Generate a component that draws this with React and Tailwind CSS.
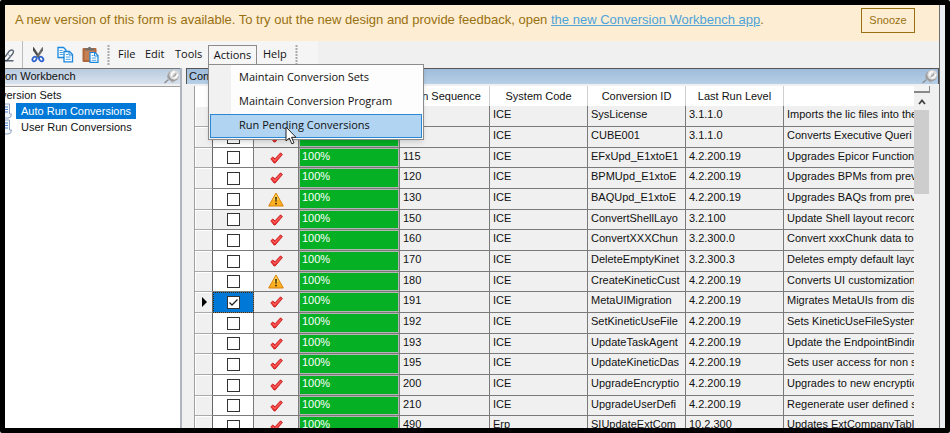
import React from "react";

const rows = [
  { seq: "", sys: "ICE", id: "SysLicense", level: "3.1.1.0", desc: "Imports the lic files into the" },
  { seq: "", sys: "ICE", id: "CUBE001", level: "3.1.1.0", desc: "Converts Executive Queri" },
  { seq: "115", sys: "ICE", id: "EFxUpd_E1xtoE1", level: "4.2.200.19", desc: "Upgrades Epicor Function" },
  { seq: "120", sys: "ICE", id: "BPMUpd_E1xtoE", level: "4.2.200.19", desc: "Upgrades BPMs from prev" },
  { seq: "130", sys: "ICE", id: "BAQUpd_E1xtoE", level: "4.2.200.19", desc: "Upgrades BAQs from prev", warn: true },
  { seq: "150", sys: "ICE", id: "ConvertShellLayo", level: "3.2.100", desc: "Update Shell layout record", dim: true },
  { seq: "160", sys: "ICE", id: "ConvertXXXChun", level: "3.2.300.0", desc: "Convert xxxChunk data to" },
  { seq: "170", sys: "ICE", id: "DeleteEmptyKinet", level: "3.2.300.3", desc: "Deletes empty default layo" },
  { seq: "180", sys: "ICE", id: "CreateKineticCust", level: "4.2.200.19", desc: "Converts UI customization", warn: true },
  { seq: "191", sys: "ICE", id: "MetaUIMigration", level: "4.2.200.19", desc: "Migrates MetaUIs from dis", current: true },
  { seq: "192", sys: "ICE", id: "SetKineticUseFile", level: "4.2.200.19", desc: "Sets KineticUseFileSystem" },
  { seq: "193", sys: "ICE", id: "UpdateTaskAgent", level: "4.2.200.19", desc: "Update the EndpointBindin" },
  { seq: "195", sys: "ICE", id: "UpdateKineticDas", level: "4.2.200.19", desc: "Sets user access for non s" },
  { seq: "200", sys: "ICE", id: "UpgradeEncryptio", level: "4.2.200.19", desc: "Upgrades to new encryptic" },
  { seq: "210", sys: "ICE", id: "UpgradeUserDefi", level: "4.2.200.19", desc: "Regenerate user defined s" },
  { seq: "490", sys: "Erp", id: "SIUpdateExtCom", level: "10.2.300", desc: "Updates ExtCompanyTabl" },
];

function Pin() {
  return (
    <svg width="16" height="15" viewBox="0 0 16 15" className="shrink-0">
      <path d="M0.500 14 L4.500 10.500" stroke="#909090" strokeWidth="1.500" />
      <path d="M3.500 5 L11 13 L8 13.500 L3 8.500 Z" fill="#a8a8a8" />
      <path d="M4 6 L10 12.500" stroke="#ececec" strokeWidth="1" />
      <ellipse cx="9.500" cy="6.500" rx="5.500" ry="5.500" fill="#999" />
      <circle cx="10.200" cy="5.800" r="4.900" fill="#dadada" />
      <path d="M7.500 7 Q7.500 2.800 11 2.800 M13.500 5 Q13 9 9.500 9" fill="none" stroke="#fff" strokeWidth="1.500" />
      <path d="M9 7 Q11 7.500 12 4.500" fill="none" stroke="#a5a5a5" strokeWidth="1.300" />
    </svg>
  );
}

function Tick() {
  return (
    <svg width="13" height="12" viewBox="0 0 13 12">
      <path d="M0.800 6.800 L2.800 5 L5 6.800 L10.600 0.800 L12.400 2.600 L5.200 11 L4 11 Z" fill="#ee3434" stroke="#c41616" strokeWidth="0.800" strokeLinejoin="round" />
      <path d="M2.500 6.600 L4.900 8.800 L11 2.300" fill="none" stroke="#ff7070" strokeWidth="1" />
    </svg>
  );
}

function Warning() {
  return (
    <svg width="16" height="15" viewBox="0 0 16 15">
      <path d="M8 1 L15.300 14 H0.700 Z" fill="#fdb022" stroke="#d98208" strokeWidth="1" strokeLinejoin="round" />
      <path d="M8 2 L11 8 H5 Z" fill="#ffd257" />
      <path d="M7.200 5 H8.800 L8.500 9.800 H7.500 Z" fill="#2c2200" />
      <rect x="7.200" y="10.800" width="1.600" height="1.600" fill="#2c2200" />
    </svg>
  );
}

function Eraser() {
  return (
    <svg width="10" height="16" viewBox="0 0 10 16" className="shrink-0">
      <path d="M0 10 L4.500 3.800 Q7.500 2 8.300 4 Q8.800 5.500 7.500 7 L2 13.500 H0" fill="#fafcff" stroke="#5b6573" strokeWidth="1.400" />
      <path d="M0 13.800 H8.500" stroke="#3d4a5c" strokeWidth="1.300" />
      <path d="M2.500 7 L5.500 9.200" stroke="#8c99ac" strokeWidth="1" />
    </svg>
  );
}

function Scissors() {
  return (
    <svg width="14" height="17" viewBox="0 0 14 17">
      <path d="M2 1 L3 1.500 L8.800 10.500 L7.200 12 L2 4.500 Z" fill="#4b4b4b" />
      <path d="M12 1 L11 1.500 L5.200 10.500 L6.800 12 L12 4.500 Z" fill="#6a6a6a" />
      <ellipse cx="3.500" cy="13" rx="1.900" ry="2.500" transform="rotate(35 3.500 13)" fill="none" stroke="#2b62d0" strokeWidth="1.800" />
      <ellipse cx="10.200" cy="13" rx="1.900" ry="2.500" transform="rotate(-35 10.200 13)" fill="none" stroke="#2b62d0" strokeWidth="1.800" />
    </svg>
  );
}

function Copy() {
  return (
    <svg width="17" height="17" viewBox="0 0 17 17">
      <path d="M1 1.500 H6.500 L9 4 V11.500 H1 Z" fill="#fff" stroke="#1a86dc" strokeWidth="1.300" />
      <path d="M2.500 4.500 H5.500 M2.500 6.500 H6 M2.500 8.500 H6" stroke="#49a3ea" strokeWidth="1" />
      <path d="M7 5.500 H12.500 L15.500 8.500 V15.800 H7 Z" fill="#fff" stroke="#1a86dc" strokeWidth="1.300" />
      <path d="M12 5.500 V9 H15.500" fill="none" stroke="#1a86dc" strokeWidth="1" />
      <path d="M8.800 8.500 H11 M8.800 11 H13.700 M8.800 13.300 H13.700" stroke="#49a3ea" strokeWidth="1" />
    </svg>
  );
}

function Paste() {
  return (
    <svg width="17" height="17" viewBox="0 0 17 17">
      <rect x="0.500" y="2" width="14" height="14" rx="1" fill="#b0673c" />
      <rect x="2.500" y="4" width="10" height="10" fill="#c57f52" />
      <path d="M3 4.500 V2.500 H5.500 Q7.500 -1 9.500 2.500 H12 V4.500 Z" fill="#6e6e6e" />
      <path d="M8 6.500 H13 L16 9.500 V16.300 H8 Z" fill="#fff" stroke="#1a86dc" strokeWidth="1.200" />
      <path d="M12.500 6.500 V10 H16" fill="none" stroke="#1a86dc" strokeWidth="1" />
      <path d="M9.700 9.500 H11.500 M9.700 12 H14.300 M9.700 14.300 H14.300" stroke="#49a3ea" strokeWidth="1" />
    </svg>
  );
}

function Page() {
  return (
    <svg width="8" height="17" viewBox="0 0 8 17" className="shrink-0">
      <path d="M0 1 H4.500 V11 H6.500 Q6.500 15 3 15 H0" fill="#f5f9ff" stroke="#8fa3c4" strokeWidth="1" />
      <path d="M0 4 H3 M0 6.500 H3 M0 9 H3" stroke="#4d7fc9" strokeWidth="1" />
    </svg>
  );
}

function Grip() {
  return (
    <svg width="3" height="20" viewBox="0 0 3 20" className="shrink-0">
      <path d="M1.500 0 V20" stroke="#a9a9a9" strokeWidth="2" strokeDasharray="2 1" />
    </svg>
  );
}

function MenuItem({ children, active }) {
  return (
    <button
      role="menuitem"
      className={
        "block h-6 w-full border pl-7 text-left whitespace-nowrap " +
        (active ? "border-[#2f86d0] bg-[#b0d4f1]" : "border-transparent")
      }
    >
      {children}
    </button>
  );
}

function Row({ row }) {
  const cell = "overflow-hidden border-r border-b border-[#7a7a7a] pb-1 pl-[3px] whitespace-nowrap";
  return (
    <tr className="h-[21px] nth-[3n]:h-5">
      <td className="border-r border-b border-r-[#666] border-b-[#aaa] bg-[#f0f0f0] shadow-[inset_1px_1px_0_#fff]">
        {row.current && (
          <svg width="18" height="10" viewBox="0 0 18 10" className="block">
            <path d="M7 0 V10 L12 5 Z" fill="#000" />
          </svg>
        )}
      </td>
      <td
        className={
          "border-r border-b border-[#7a7a7a] " +
          (row.current ? "bg-[#0078d7] outline-1 -outline-offset-1 outline-dotted outline-[#3a2a10]" : row.dim ? "bg-[#f0f0f0]" : "bg-white")
        }
      >
        <div className="grid place-items-center">
          <input
            type="checkbox"
            aria-label={"Select " + row.id}
            defaultChecked={row.current}
            className="col-start-1 row-start-1 size-[13px] appearance-none border border-[#333] bg-white"
          />
          {row.current && (
            <svg width="13" height="13" viewBox="0 0 13 13" className="pointer-events-none z-0 col-start-1 row-start-1">
              <path d="M2.500 6.500 L5 9 L10.500 3.500" fill="none" stroke="#222" strokeWidth="1.300" />
            </svg>
          )}
        </div>
      </td>
      <td className="border-r border-b border-[#7a7a7a]">
        <div className="flex justify-center">{row.warn ? <Warning /> : <Tick />}</div>
      </td>
      <td className="border-r border-b border-[#7a7a7a] bg-[#06b025] pb-1 pl-[3px] text-white shadow-[inset_0_0_0_1px_#b4b4b4]">100%</td>
      <td className={cell}>{row.seq}</td>
      <td className={cell}>{row.sys}</td>
      <td className={cell}>{row.id}</td>
      <td className={cell}>{row.level}</td>
      <td className={cell + " border-r-0"}>{row.desc}</td>
    </tr>
  );
}

export default function App() {
  const th = "border-r border-[#d0d0d0] text-center font-normal whitespace-nowrap";
  return (
    <div className="h-screen bg-white text-[11px] text-[#111] [font-family:'Liberation_Sans',Arial,sans-serif]">
      <div className="h-full overflow-hidden rounded-xs border-[5px] border-black bg-[#eaedf1] pr-[5px]">
        <div className="flex h-full flex-col border-r border-[#6f6f6f] bg-[#f0f0f0]">
          <header className="flex h-9 shrink-0 items-center justify-between bg-[#fdedd3] pr-6 pb-1.5 pl-2.5 text-[13px] text-[#99700f]">
            <p className="whitespace-nowrap">
              A new version of this form is available. To try out the new design and provide feedback, open{" "}
              <a href="#app" className="text-[#4fa3d8] underline">the new Conversion Workbench app</a>.
            </p>
            <button className="h-[25px] w-[54px] border border-[#99700f] text-[11px]">Snooze</button>
          </header>

          <nav className="flex h-[27px] shrink-0 items-center [font-family:'Open_Sans','Noto_Sans',sans-serif]">
            <div className="flex h-full items-center bg-[#f5f5f5] pr-5">
              <Eraser />
              <div className="ml-[7px] h-full w-px bg-[#bcbcbc]" />
              <button aria-label="Cut" className="ml-2"><Scissors /></button>
              <button aria-label="Copy" className="ml-3"><Copy /></button>
              <button aria-label="Paste" className="mr-2 ml-2"><Paste /></button>
              <Grip />
              <button className="ml-2 w-[27px] text-left">File</button>
              <button className="w-[30px] text-left">Edit</button>
              <button className="w-[33px] text-left">Tools</button>
              <div className="relative">
                <button className="block h-5 w-[49px] border border-b-0 border-[#8c8c8c] bg-[#f6f6f6]">Actions</button>
                <div role="menu" className="absolute top-[19px] left-0 z-10 w-[216px] border border-[#8c8c8c] bg-linear-to-r from-[#f1f1f1] from-[22px] to-[#fdfdfd] to-[22px] p-px shadow-md">
                  <MenuItem>Maintain Conversion Sets</MenuItem>
                  <MenuItem>Maintain Conversion Program</MenuItem>
                  <MenuItem active>Run Pending Conversions</MenuItem>
                  <svg width="12" height="19" viewBox="0 0 12 19" className="pointer-events-none absolute top-[61px] left-[76px]">
                    <path d="M1 1 V15 L4.300 12 L6.800 17.800 L9 16.800 L6.500 11.300 H11 Z" fill="#fff" stroke="#222" strokeWidth="1" />
                  </svg>
                </div>
              </div>
              <button className="ml-1.5 w-8 text-left">Help</button>
              <Grip />
            </div>
          </nav>

          <main className="flex min-h-0 flex-1">
            <aside className="flex w-[177px] shrink-0 flex-col border-r-2 border-[#b0b4be]">
              <h2 className="flex h-4 shrink-0 items-center justify-between border-t border-[#777] bg-linear-to-b from-[#b9cbdf] to-[#d8e2ee]">
                on Workbench
                <Pin />
              </h2>
              <div className="mt-0.5 flex-1 overflow-hidden border-t border-[#a0a0a0] bg-white">
                <div className="-ml-1 h-4 leading-4">version Sets</div>
                <div className="flex h-4 items-center">
                  <Page />
                  <a href="#auto" className="ml-[3px] bg-[#0078d7] px-[5px] leading-4 text-white">Auto Run Conversions</a>
                </div>
                <div className="flex h-4 items-center">
                  <Page />
                  <a href="#user" className="ml-[3px] px-[5px] leading-4">User Run Conversions</a>
                </div>
              </div>
            </aside>

            <section className="ml-1 flex min-w-0 flex-1 flex-col">
              <h2 className="flex h-4 shrink-0 items-center justify-between border border-b-0 border-[#555] bg-linear-to-b from-[#9fbcdb] to-[#b7cfe7] pl-0.5">
                Conversions
                <Pin />
              </h2>
              <div className="flex min-h-0 flex-1 pt-0.5 pr-[9px] pl-2">
                <div className="min-w-0 flex-1 overflow-hidden border-l border-[#a0a0a0]">
                  <table className="w-full table-fixed border-separate border-spacing-0 leading-[14px]">
                    <colgroup>
                      <col className="w-[18px]" />
                      <col className="w-[41px]" />
                      <col className="w-[45px]" />
                      <col className="w-[101px]" />
                      <col className="w-[90px]" />
                      <col className="w-[98px]" />
                      <col className="w-[98px]" />
                      <col className="w-[98px]" />
                      <col />
                    </colgroup>
                    <thead>
                      <tr className="h-5 bg-white">
                        <th className={th} />
                        <th className={th} />
                        <th className={th} />
                        <th className={th} />
                        <th className={th}>Run Sequence</th>
                        <th className={th}>System Code</th>
                        <th className={th}>Conversion ID</th>
                        <th className={th}>Last Run Level</th>
                        <th />
                      </tr>
                    </thead>
                    <tbody>
                      {rows.map((row) => (
                        <Row key={row.id} row={row} />
                      ))}
                    </tbody>
                  </table>
                </div>
                <div className="flex w-4 shrink-0 flex-col">
                  <div className="h-[7px] border-r border-b-2 border-[#888] bg-[#f4f4f4]" />
                  <button aria-label="Scroll up" className="grid h-[17px] place-items-center">
                    <svg width="8" height="6" viewBox="0 0 8 6">
                      <path d="M1 5 L4 1.500 L7 5" fill="none" stroke="#444" strokeWidth="1.800" />
                    </svg>
                  </button>
                  <div className="h-[84px] w-[15px] bg-[#cdcdcd]" />
                </div>
              </div>
            </section>
          </main>
        </div>
      </div>
    </div>
  );
}
